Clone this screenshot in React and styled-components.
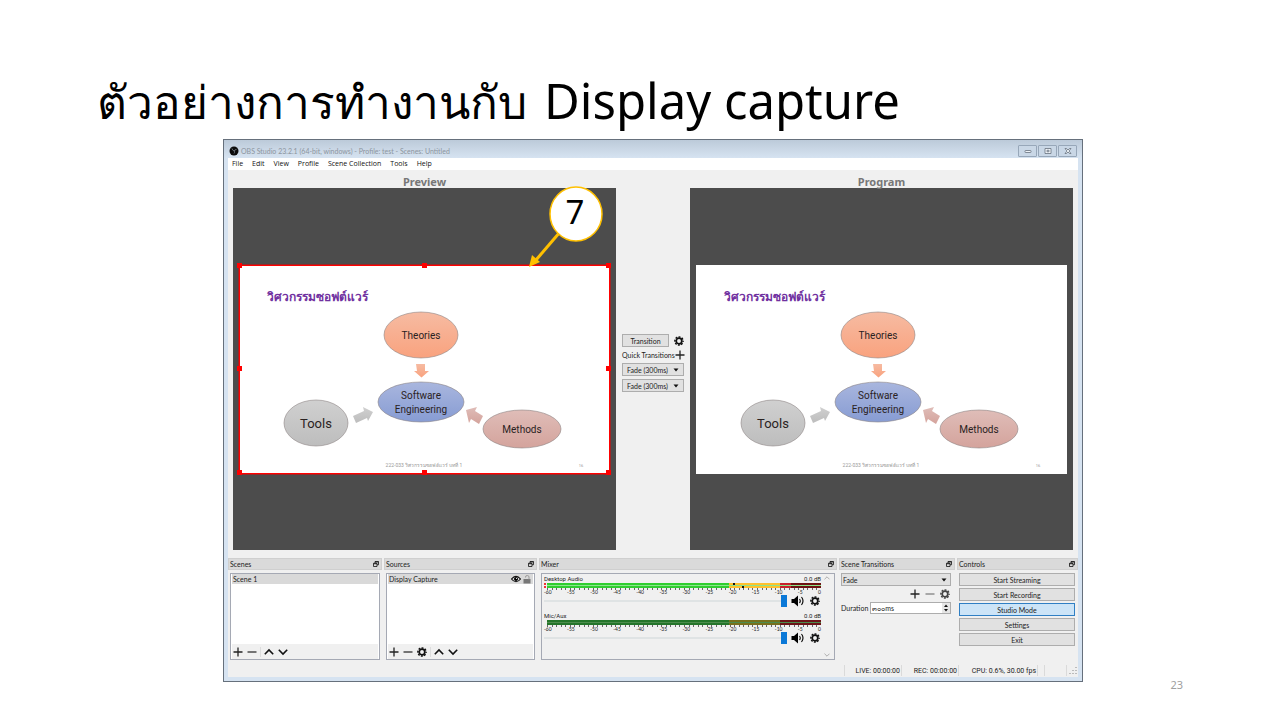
import React from "react";
import styled, { createGlobalStyle, css } from "styled-components";

const GlobalStyle = createGlobalStyle`
  *, *::before, *::after { box-sizing: border-box; }
  body { margin: 0; background: #fff; font-family: "Noto Sans", "Open Sans", sans-serif; }
  button, input, select { font: inherit; color: inherit; margin: 0; }
`;

const line = "#adadad";

/* ---------- slide ---------- */
const Slide = styled.main`
  min-height: 100vh;
  padding: 62px 0 28px;
`;
const Title = styled.h1`
  display: flex;
  align-items: baseline;
  gap: 17px;
  margin: 0;
  padding: 0 97px;
  height: 77px;
  line-height: 76px;
  font-size: 49px;
  font-weight: 400;
  color: #000;
  white-space: pre;
`;
const Thai = styled.span`
  font-size: 46px;
  font-weight: 500;
`;
const Stage = styled.div`
  display: grid;
  grid-template-columns: 223px minmax(0, 1fr) 197px;
`;
const PageNumber = styled.small`
  grid-column: 3;
  align-self: end;
  padding-right: 97px;
  text-align: right;
  font-size: 11px;
  line-height: 12px;
  color: #a0a0a0;
`;

/* ---------- window ---------- */
const Window = styled.section`
  grid-column: 2;
  margin-bottom: 9px;
  border: 1px solid #66707c;
  padding: 0 4px 4px;
  background: #d6e3f1;
  font-family: Lato, "Noto Sans", sans-serif;
  font-size: 7px;
  line-height: 10px;
  color: #1c1c1c;
`;
const TitleBar = styled.header`
  display: flex;
  align-items: center;
  gap: 2px;
  height: 18px;
  margin: 0 -4px;
  padding: 3px 5px 0;
  background: linear-gradient(#bccad9, #d6e3f1);
  color: #8c959f;
`;
const WindowName = styled.span`
  flex: 1;
`;
const Caption = styled.button`
  display: grid;
  place-items: center;
  width: 19px;
  height: 12px;
  padding: 0;
  border: 1px solid #97a7b9;
  border-radius: 1px;
  background: #c9d7e6;
  & + & { margin-left: -1px; }
`;
const MenuBar = styled.nav`
  display: flex;
  gap: 9px;
  height: 12px;
  padding: 0 4px;
  background: #fff;
  font-family: "Open Sans", sans-serif;
  line-height: 12px;
`;
const MenuLink = styled.a`
  color: #111;
  text-decoration: none;
`;
const Client = styled.div`
  background: #f0f0f0;
`;

/* ---------- studio mode ---------- */
const Studio = styled.div`
  display: grid;
  grid-template-columns: minmax(0, 1fr) 74px minmax(0, 1fr);
  padding: 6px 5px 8px;
`;
const View = styled.section`
  position: relative;
`;
const ViewName = styled.h2`
  margin: 0;
  height: 12px;
  font-family: "Noto Sans", sans-serif;
  font-size: 11px;
  line-height: 12px;
  font-weight: 700;
  text-align: center;
  color: #777;
`;
const Canvas = styled.div`
  display: flex;
  flex-direction: column;
  justify-content: center;
  aspect-ratio: 383 / 362;
  padding: 0 6px;
  background: #4c4c4c;
`;
const Sheet = styled.div`
  position: relative;
  background: #fff;
  font-family: Roboto, "Noto Sans", sans-serif;
  svg { display: block; width: 100%; }
`;
const Selection = styled.div`
  position: absolute;
  inset: 0;
  border: 1px solid #f00;
  box-shadow: 0 0 0 1px #9c2626;
`;
const Handle = styled.i`
  position: absolute;
  left: ${(p) => p.$x};
  top: ${(p) => p.$y};
  width: 5px;
  height: 5px;
  margin: -3px;
  background: #f00;
`;
const Callout = styled.svg`
  position: absolute;
  top: 10px;
  right: 12px;
  font-family: "Noto Sans", sans-serif;
`;
const Between = styled.div`
  display: flex;
  flex-direction: column;
  justify-content: center;
  gap: 3px;
  padding: 0 6px;
  white-space: nowrap;
`;
const Row = styled.div`
  display: flex;
  align-items: center;
  justify-content: ${(p) => p.$justify || "space-between"};
  gap: ${(p) => p.$gap || 0}px;
`;

const Button = styled.button`
  display: flex;
  align-items: center;
  justify-content: center;
  gap: 5px;
  width: ${(p) => p.$width || "100%"};
  height: 13px;
  padding: 0 2px;
  border: 1px solid ${line};
  background: #e1e1e1;
  line-height: 10px;
  white-space: nowrap;
  ${(p) => p.$on && css`
    border-color: #2f7fc4;
    background: #cce4f7;
  `}
`;
const IconButton = styled.button`
  display: grid;
  place-items: center;
  flex: none;
  width: ${(p) => p.$size || 12}px;
  height: ${(p) => p.$size || 12}px;
  padding: 0;
  border: 0;
  background: none;
  svg { display: block; }
`;

/* ---------- docks ---------- */
const Docks = styled.div`
  display: grid;
  grid-template-columns: 154fr 153fr 298fr 116fr 121fr;
  gap: 2px;
`;
const Dock = styled.section`
  display: flex;
  flex-direction: column;
  min-width: 0;
`;
const DockHead = styled.header`
  display: flex;
  align-items: center;
  justify-content: space-between;
  height: 12px;
  padding: 0 1px;
  border: 1px solid #cfcfcf;
  background: #dadada;
  line-height: 10px;
`;
const DockName = styled.h3`
  margin: 0;
  font: inherit;
`;
const DockBody = styled.div`
  flex: 1;
  padding: 3px 2px 0;
`;
const Frame = styled.div`
  display: flex;
  flex-direction: column;
  height: 87px;
  padding: 0 1px;
  border: 1px solid #a5a9b4;
  background: #fff;
`;
const Item = styled.div`
  display: flex;
  align-items: center;
  gap: 1px;
  height: 10px;
  padding: 0 1px;
  background: #d9d9d9;
`;
const ItemName = styled.span`
  flex: 1;
`;
const Tools = styled.div`
  display: flex;
  align-items: center;
  gap: 2px;
  height: 15px;
  margin-top: auto;
  background: #f0f0f0;
`;
const Divider = styled.i`
  width: 1px;
  height: 10px;
  background: #dcdcdc;
`;

/* ---------- mixer ---------- */
const MixerFrame = styled(Frame)`
  flex-direction: row;
  justify-content: space-between;
  background: #f0f0f0;
`;
const Channels = styled.div`
  flex: 1;
  display: flex;
  flex-direction: column;
  gap: 3px;
  padding: 0 2px 0 1px;
`;
const Scroll = styled.div`
  display: flex;
  flex-direction: column;
  justify-content: space-between;
  width: 10px;
`;
const Small = styled.span`
  font-family: Roboto, sans-serif;
  font-size: 6px;
  line-height: 9px;
`;
const Meter = styled.div`
  position: relative;
  display: grid;
  gap: 1px;
  height: 5px;
  margin-left: 3px;
  background: ${(p) => (p.$live ? "#8be58b" : "#4d8c4d")};
`;
const Level = styled.i`
  display: block;
  background: ${(p) =>
    p.$live
      ? "linear-gradient(90deg, #2fce2f 66.5%, #ffc02d 66.5% 85%, #c8202a 85% 89%, #6d1212 89%)"
      : "linear-gradient(90deg, #24752a 66.5%, #77701c 66.5% 85%, #6b1417 85%)"};
`;
const Peak = styled.i`
  position: absolute;
  left: ${(p) => p.$at};
  top: ${(p) => p.$row}px;
  width: 2px;
  height: 2px;
  background: ${(p) => p.$color || "#111"};
`;
const Ticks = styled.div`
  height: 2px;
  margin-left: 3px;
  background: repeating-linear-gradient(90deg, #666 0 1px, transparent 1px calc(100% / 60));
`;
const Scale = styled.div`
  display: flex;
  justify-content: space-between;
  height: 4px;
  font-size: 5px;
  line-height: 5px;
  color: #222;
`;
const Volume = styled.input`
  appearance: none;
  flex: 1;
  min-width: 0;
  height: 12px;
  background: linear-gradient(transparent 5px, #dfe3e4 5px 7px, transparent 7px);
  &::-webkit-slider-thumb {
    appearance: none;
    width: 6px;
    height: 12px;
    background: #0a78d7;
  }
`;

/* ---------- transitions and controls ---------- */
const SelectWrap = styled.div`
  display: flex;
  align-items: center;
  height: 13px;
  padding-right: 3px;
  border: 1px solid ${line};
  background: #e1e1e1;
`;
const Select = styled.select`
  appearance: none;
  flex: 1;
  min-width: 0;
  height: 11px;
  padding: 0 1px;
  border: 0;
  background: none;
`;
const Spin = styled.div`
  display: flex;
  align-items: center;
  flex: 1;
  min-width: 0;
  height: 12px;
  border: 1px solid ${line};
  background: #fff;
`;
const SpinInput = styled.input`
  flex: 1;
  min-width: 0;
  height: 10px;
  padding: 0 1px;
  border: 0;
  background: none;
`;
const TransitionStack = styled.div`
  display: grid;
  grid-template-columns: minmax(0, 1fr);
  gap: 2px;
  padding-right: 2px;
`;
const ControlStack = styled.div`
  display: grid;
  gap: 2px;
  padding: 0 1px 0 0;
`;
const StatusBar = styled.footer`
  display: flex;
  justify-content: flex-end;
  align-items: center;
  height: 17px;
  padding-top: 4px;
  font-family: Roboto, sans-serif;
`;
const Status = styled.span`
  width: ${(p) => p.$w || 0}px;
  height: 11px;
  padding-right: 1px;
  border-right: 1px solid #dadada;
  line-height: 12px;
  text-align: right;
  white-space: nowrap;
`;

/* ---------- icons ---------- */
const Gear = ({ size = 10, color = "#111" }) => (
  <svg width={size} height={size} viewBox="0 0 20 20" fill="none" stroke={color}>
    <circle cx="10" cy="10" r="5.6" strokeWidth="3.400" />
    <circle cx="10" cy="10" r="8.2" strokeWidth="3" strokeDasharray="3.8 2.64" strokeDashoffset="1.9" />
  </svg>
);
const Plus = ({ color = "#222" }) => (
  <svg width="10" height="10" viewBox="0 0 10 10" stroke={color} strokeWidth="1.3">
    <path d="M.5 5h9M5 .5v9" />
  </svg>
);
const Minus = ({ color = "#222" }) => (
  <svg width="10" height="10" viewBox="0 0 10 10" stroke={color} strokeWidth="1.2">
    <path d="M.5 5h9" />
  </svg>
);
const Chevron = ({ down, color = "#111", w = 1.6, size = 10 }) => (
  <svg width={size} height={size} viewBox="0 0 10 10" fill="none" stroke={color} strokeWidth={w}>
    <path d={down ? "M.8 2.8 5 7l4.2-4.2" : "M.8 7.2 5 3l4.2 4.2"} />
  </svg>
);
const Caret = () => (
  <svg width="6" height="4" viewBox="0 0 6 4">
    <path d="M.5.5h5L3 3.5z" fill="#111" />
  </svg>
);
const Float = () => (
  <svg width="6" height="6" viewBox="0 0 12 12" fill="none" stroke="#111" strokeWidth="1.600">
    <path d="M4 4V1h7v6.500H8M4 2h7" />
    <path d="M1 4.500h7V11H1zM1 5.500h7" />
  </svg>
);
const Eye = () => (
  <svg width="10" height="8" viewBox="0 0 20 14">
    <path d="M1 7Q10-4 19 7 10 18 1 7z" fill="none" stroke="#000" strokeWidth="2.2" />
    <circle cx="10" cy="7" r="4" fill="#000" />
    <circle cx="11" cy="5.6" r="1.2" fill="#fff" />
  </svg>
);
const Lock = () => (
  <svg width="8" height="9" viewBox="0 0 16 18">
    <path d="M1 8h14v9H1z" fill="#777" />
    <path d="M5 5V4q0-3 3.5-3T12 4v5" fill="none" stroke="#999" strokeWidth="2" />
  </svg>
);
const Speaker = () => (
  <svg width="14" height="12" viewBox="0 0 28 24">
    <path d="M1 8h5l8-7v22l-8-7H1z" fill="#000" />
    <path d="M17 8q3 4 0 8M21 4q6 8 0 16" fill="none" stroke="#000" strokeWidth="2.2" />
  </svg>
);
const ObsLogo = () => (
  <svg width="10" height="10" viewBox="0 0 20 20">
    <circle cx="10" cy="10" r="9" fill="#0b0b0b" />
    <path d="M6 5q1 4 4.500 5M15 7q-4 0-4.500 3M10 15q2-2 .5-5" fill="none" stroke="#8c97a3" strokeWidth="1.3" />
  </svg>
);
const CaptionGlyph = ({ kind }) => (
  <svg width="8" height="6" viewBox="0 0 16 12" fill="#eef3f8" stroke="#67717d" strokeWidth="1.6">
    {kind === "Minimize" && <rect x="2" y="5" width="12" height="4" rx="1" />}
    {kind === "Maximize" && <path d="M2 1h12v10H2zM6 4.500h4v3H6z" />}
    {kind === "Close" && <path d="M2 1h3l3 3 3-3h3l-4 5 4 5h-3L8 8l-3 3H2l4-5z" />}
  </svg>
);

/* ---------- diagram shown on both canvases ---------- */
const Diagram = ({ id }) => {
  const fills = [
    ["o", "#f6bba2", "#f9a27e"],
    ["b", "#a9b6de", "#879cd3"],
    ["g", "#d0d0d0", "#bdbdbd"],
    ["r", "#dfbdb8", "#d4a39c"],
  ];
  const url = (k) => `url(#${id}-${k})`;
  return (
    <svg viewBox="0 0 371 209" fontSize="10" textAnchor="middle" fill="#2a2222">
      <defs>
        {fills.map(([k, a, b]) => (
          <linearGradient key={k} id={`${id}-${k}`} x1="0" y1="0" x2="0" y2="1">
            <stop offset="0" stopColor={a} />
            <stop offset="1" stopColor={b} />
          </linearGradient>
        ))}
      </defs>
      <text x="28" y="36" textAnchor="start" fontSize="12" fontWeight="700" fill="#7030a0">
        วิศวกรรมซอฟต์แวร์
      </text>
      <g stroke="#8d8585" strokeWidth=".6">
        <ellipse cx="182" cy="70" rx="37" ry="23" fill={url("o")} />
        <ellipse cx="182" cy="137" rx="43" ry="20" fill={url("b")} />
        <ellipse cx="77" cy="158" rx="32" ry="23" fill={url("g")} />
        <ellipse cx="283" cy="164" rx="39" ry="19" fill={url("r")} />
      </g>
      <path d="M177 99h9v7h4l-7.500 6.500-7.500-6.500h3z" fill={url("o")} />
      <path d="M114 151l11-5-1-4 10 5-5 9-1-3-11 5z" fill={url("g")} />
      <path d="m227 145 11-3-2 4 8 5-4 8-8-5-2 4z" fill={url("r")} />
      <text x="182" y="74">Theories</text>
      <text x="182" y="134">Software</text>
      <text x="182" y="148">Engineering</text>
      <text x="77" y="163" fontSize="13">Tools</text>
      <text x="283" y="168">Methods</text>
      <text x="185" y="202" fontSize="5" fill="#999">222-033 วิศวกรรมซอฟต์แวร์ บทที่ 1</text>
      <text x="342" y="202" fontSize="4" fill="#999">16</text>
    </svg>
  );
};

const Panel = ({ name, children }) => (
  <Dock aria-label={name}>
    <DockHead>
      <DockName>{name}</DockName>
      <IconButton $size={8} aria-label={`Undock ${name}`}><Float /></IconButton>
    </DockHead>
    <DockBody>{children}</DockBody>
  </Dock>
);

const marks = [-60, -55, -50, -45, -40, -35, -30, -25, -20, -15, -10, -5, 0];

const Channel = ({ name, live }) => (
  <div>
    <Row>
      <Small>{name}</Small>
      <Small>0.0 dB</Small>
    </Row>
    <Meter $live={live}>
      <Level $live={live} />
      <Level $live={live} />
      {live && (
        <>
          <Peak $at="-3px" $row={0} $color="#e33" />
          <Peak $at="-3px" $row={3} $color="#e33" />
          <Peak $at="68%" $row={0} />
          <Peak $at="71%" $row={3} />
        </>
      )}
    </Meter>
    <Ticks />
    <Scale>{marks.map((m) => <span key={m}>{m}</span>)}</Scale>
    <Row $gap={4}>
      <Volume type="range" min="0" max="100" defaultValue="100" aria-label={`${name} volume`} />
      <IconButton $size={14} aria-label={`Mute ${name}`}><Speaker /></IconButton>
      <IconButton $size={12} aria-label={`${name} settings`}><Gear /></IconButton>
    </Row>
  </div>
);

const handles = [
  ["0%", "0%"], ["50%", "0%"], ["100%", "0%"],
  ["0%", "50%"], ["100%", "50%"],
  ["0%", "100%"], ["50%", "100%"], ["100%", "100%"],
];

export default function App() {
  return (
    <Slide>
      <GlobalStyle />
      <Title><Thai>ตัวอย่างการทำงานกับ</Thai><span>Display capture</span></Title>
      <Stage>
        <Window>
          <TitleBar>
            <ObsLogo />
            <WindowName>OBS Studio 23.2.1 (64-bit, windows) - Profile: test - Scenes: Untitled</WindowName>
            {["Minimize", "Maximize", "Close"].map((k) => (
              <Caption key={k} aria-label={k}><CaptionGlyph kind={k} /></Caption>
            ))}
          </TitleBar>
          <MenuBar>
            {["File", "Edit", "View", "Profile", "Scene Collection", "Tools", "Help"].map((m) => (
              <MenuLink key={m} href="#">{m}</MenuLink>
            ))}
          </MenuBar>
          <Client>
            <Studio>
              <View>
                <ViewName>Preview</ViewName>
                <Canvas>
                  <Sheet>
                    <Diagram id="preview" />
                    <Selection>
                      {handles.map(([x, y]) => <Handle key={x + y} $x={x} $y={y} />)}
                    </Selection>
                  </Sheet>
                </Canvas>
                <Callout width="76" height="82" viewBox="0 0 76 82">
                  <path d="M32 46 8 74" stroke="#ffc000" strokeWidth="3" />
                  <path d="M1 81 4 69l8 7z" fill="#ffc000" />
                  <ellipse cx="48" cy="28" rx="26" ry="27" fill="#fff" stroke="#ffc000" strokeWidth="1.500" />
                  <text x="47" y="38" textAnchor="middle" fontSize="33">7</text>
                </Callout>
              </View>
              <Between>
                <Row>
                  <Button $width="47px">Transition</Button>
                  <IconButton $size={10} aria-label="Transition settings"><Gear /></IconButton>
                </Row>
                <Row>
                  <span>Quick Transitions</span>
                  <IconButton $size={10} aria-label="Add quick transition"><Plus /></IconButton>
                </Row>
                <Button>Fade (300ms) <Caret /></Button>
                <Button>Fade (300ms) <Caret /></Button>
              </Between>
              <View>
                <ViewName>Program</ViewName>
                <Canvas>
                  <Sheet><Diagram id="program" /></Sheet>
                </Canvas>
              </View>
            </Studio>
            <Docks>
              <Panel name="Scenes">
                <Frame>
                  <Item><ItemName>Scene 1</ItemName></Item>
                  <Tools>
                    <IconButton aria-label="Add scene"><Plus /></IconButton>
                    <IconButton aria-label="Remove scene"><Minus /></IconButton>
                    <Divider />
                    <IconButton aria-label="Move scene up"><Chevron /></IconButton>
                    <IconButton aria-label="Move scene down"><Chevron down /></IconButton>
                  </Tools>
                </Frame>
              </Panel>
              <Panel name="Sources">
                <Frame>
                  <Item>
                    <ItemName>Display Capture</ItemName>
                    <IconButton $size={10} aria-label="Toggle visibility"><Eye /></IconButton>
                    <IconButton $size={10} aria-label="Toggle lock"><Lock /></IconButton>
                  </Item>
                  <Tools>
                    <IconButton aria-label="Add source"><Plus /></IconButton>
                    <IconButton aria-label="Remove source"><Minus /></IconButton>
                    <IconButton aria-label="Source properties"><Gear /></IconButton>
                    <Divider />
                    <IconButton aria-label="Move source up"><Chevron /></IconButton>
                    <IconButton aria-label="Move source down"><Chevron down /></IconButton>
                  </Tools>
                </Frame>
              </Panel>
              <Panel name="Mixer">
                <MixerFrame>
                  <Channels>
                    <Channel name="Desktop Audio" live />
                    <Channel name="Mic/Aux" />
                  </Channels>
                  <Scroll>
                    <IconButton $size={8} aria-label="Scroll up"><Chevron color="#aaa" size={6} /></IconButton>
                    <IconButton $size={8} aria-label="Scroll down"><Chevron down color="#aaa" size={6} /></IconButton>
                  </Scroll>
                </MixerFrame>
              </Panel>
              <Panel name="Scene Transitions">
                <TransitionStack>
                  <SelectWrap>
                    <Select aria-label="Scene transition" defaultValue="Fade">
                      <option>Fade</option>
                      <option>Cut</option>
                    </Select>
                    <Caret />
                  </SelectWrap>
                  <Row $justify="flex-end" $gap={3}>
                    <IconButton aria-label="Add transition"><Plus /></IconButton>
                    <IconButton aria-label="Remove transition"><Minus color="#777" /></IconButton>
                    <IconButton aria-label="Transition properties"><Gear color="#444" /></IconButton>
                  </Row>
                  <Row $gap={2}>
                    <label htmlFor="duration">Duration</label>
                    <Spin>
                      <SpinInput id="duration" defaultValue="๓๐๐ms" />
                      <svg width="8" height="10" viewBox="0 0 8 10">
                        <path d="M0 0h8v10H0z" fill="#e6e6e6" />
                        <path d="M2 4l2-2.500L6 4zM2 6l2 2.500L6 6z" fill="#111" />
                      </svg>
                    </Spin>
                  </Row>
                </TransitionStack>
              </Panel>
              <Panel name="Controls">
                <ControlStack>
                  {["Start Streaming", "Start Recording", "Studio Mode", "Settings", "Exit"].map((c) => (
                    <Button key={c} $on={c === "Studio Mode"}>{c}</Button>
                  ))}
                </ControlStack>
              </Panel>
            </Docks>
            <StatusBar>
              <Status />
              <Status $w={57}>LIVE: 00:00:00</Status>
              <Status $w={57}>REC: 00:00:00</Status>
              <Status $w={79}>CPU: 0.6%, 30.00 fps</Status>
              <Status $w={7} />
              <Status $w={22} />
              <svg width="11" height="11" viewBox="6 0 11 11" fill="#bbb">
                <path d="M14 8h2v1h-2zM11 8h2v1h-2zM14 5h2v1h-2zM8 8h2v1H8zM11 5h2v1h-2zM14 2h2v1h-2z" />
              </svg>
            </StatusBar>
          </Client>
        </Window>
        <PageNumber>23</PageNumber>
      </Stage>
    </Slide>
  );
}
